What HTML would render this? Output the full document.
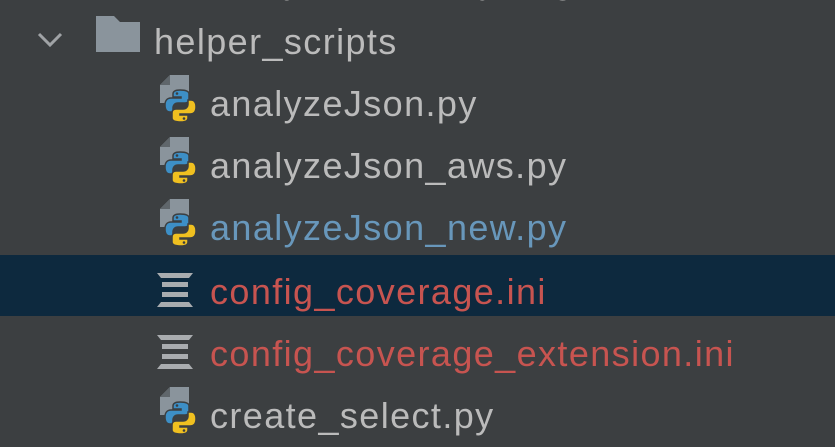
<!DOCTYPE html>
<html><head><style>
body{margin:0;width:835px;height:440px;overflow:hidden;background:#3c3f41;font-family:"Liberation Sans",sans-serif;position:relative}
.row{position:absolute;left:0;width:835px;height:62px}
.t{position:absolute;font-size:36px;letter-spacing:1.4px;line-height:62px;top:0;color:#bbbbbb;white-space:nowrap}
.ic{position:absolute}
</style></head><body>
<div class="row" style="top:-48px"><div class="t" style="left:210px;top:-2px">analyze_files_by_tag</div></div>
<div class="row" style="top:11px">
<svg class="ic" style="left:36px;top:20px" width="30" height="20"><path d="M3 3 L14 14 L25 3" stroke="#a0a3a6" stroke-width="3" fill="none"/></svg>
<svg class="ic" style="left:96px;top:5px" width="44" height="40"><path d="M0 0 H18 L24 6 H44 V36 H0 Z" fill="#8a949c"/></svg>
<div class="t" style="left:154px">helper_scripts</div></div>
<div class="row" style="top:73px" id="r1"></div>
<div class="row" style="top:135px" id="r2"></div>
<div class="row" style="top:197px" id="r3"></div>
<div class="row" style="top:255px;background:#0d293e;height:61px"></div>
<div class="row" style="top:261px" id="r4"></div>
<div class="row" style="top:323px" id="r5"></div>
<div class="row" style="top:385px" id="r6"></div>
<script>
function py(){return '<svg class="ic" style="left:158px;top:2px" width="44" height="50"><path d="M12 0 H31 V28 H2 V10 Z" fill="#8a949c"/><path d="M2 10 L12 0 V10 Z" fill="#5f666b"/><path d="M22 15 c-6 0 -7 2 -7 4 v3 h8 v1 h-10 c-4 0 -6 3 -6 7 c0 5 2 7 5 7 h3 v-4 c0 -3 2 -5 5 -5 h7 c3 0 4 -2 4 -4 v-5 c0 -2 -2 -4 -9 -4z" fill="#3d8fc6" stroke="#3c3f41" stroke-width="1.5"/><path d="M23 47 c6 0 7 -2 7 -4 v-3 h-8 v-1 h10 c4 0 6 -3 6 -7 c0 -5 -2 -7 -5 -7 h-3 v4 c0 3 -2 5 -5 5 h-7 c-3 0 -4 2 -4 4 v5 c0 2 2 4 9 4z" fill="#f0c020" stroke="#3c3f41" stroke-width="1.5"/><circle cx="19" cy="18.5" r="1.3" fill="#3c3f41"/><circle cx="26" cy="43.5" r="1.3" fill="#3c3f41"/></svg>'}
function ini(){return '<svg class="ic" style="left:157px;top:12px" width="36" height="36"><path d="M0 0 H36 L32 5 H4 Z M0 34 H36 L32 29 H4 Z" fill="#a9acaf"/><rect x="5" y="9" width="26" height="5" fill="#a9acaf"/><rect x="5" y="19" width="26" height="5" fill="#a9acaf"/></svg>'}
var d=[['r1',py(),'analyzeJson.py','#bbbbbb'],['r2',py(),'analyzeJson_aws.py','#bbbbbb'],['r3',py(),'analyzeJson_new.py','#6897bb'],['r4',ini(),'config_coverage.ini','#c75450'],['r5',ini(),'config_coverage_extension.ini','#c75450'],['r6',py(),'create_select.py','#bbbbbb']];
d.forEach(function(x){document.getElementById(x[0]).innerHTML=x[1]+'<div class="t" style="left:210px;color:'+x[3]+'">'+x[2]+'</div>'});
</script>
</body></html>
